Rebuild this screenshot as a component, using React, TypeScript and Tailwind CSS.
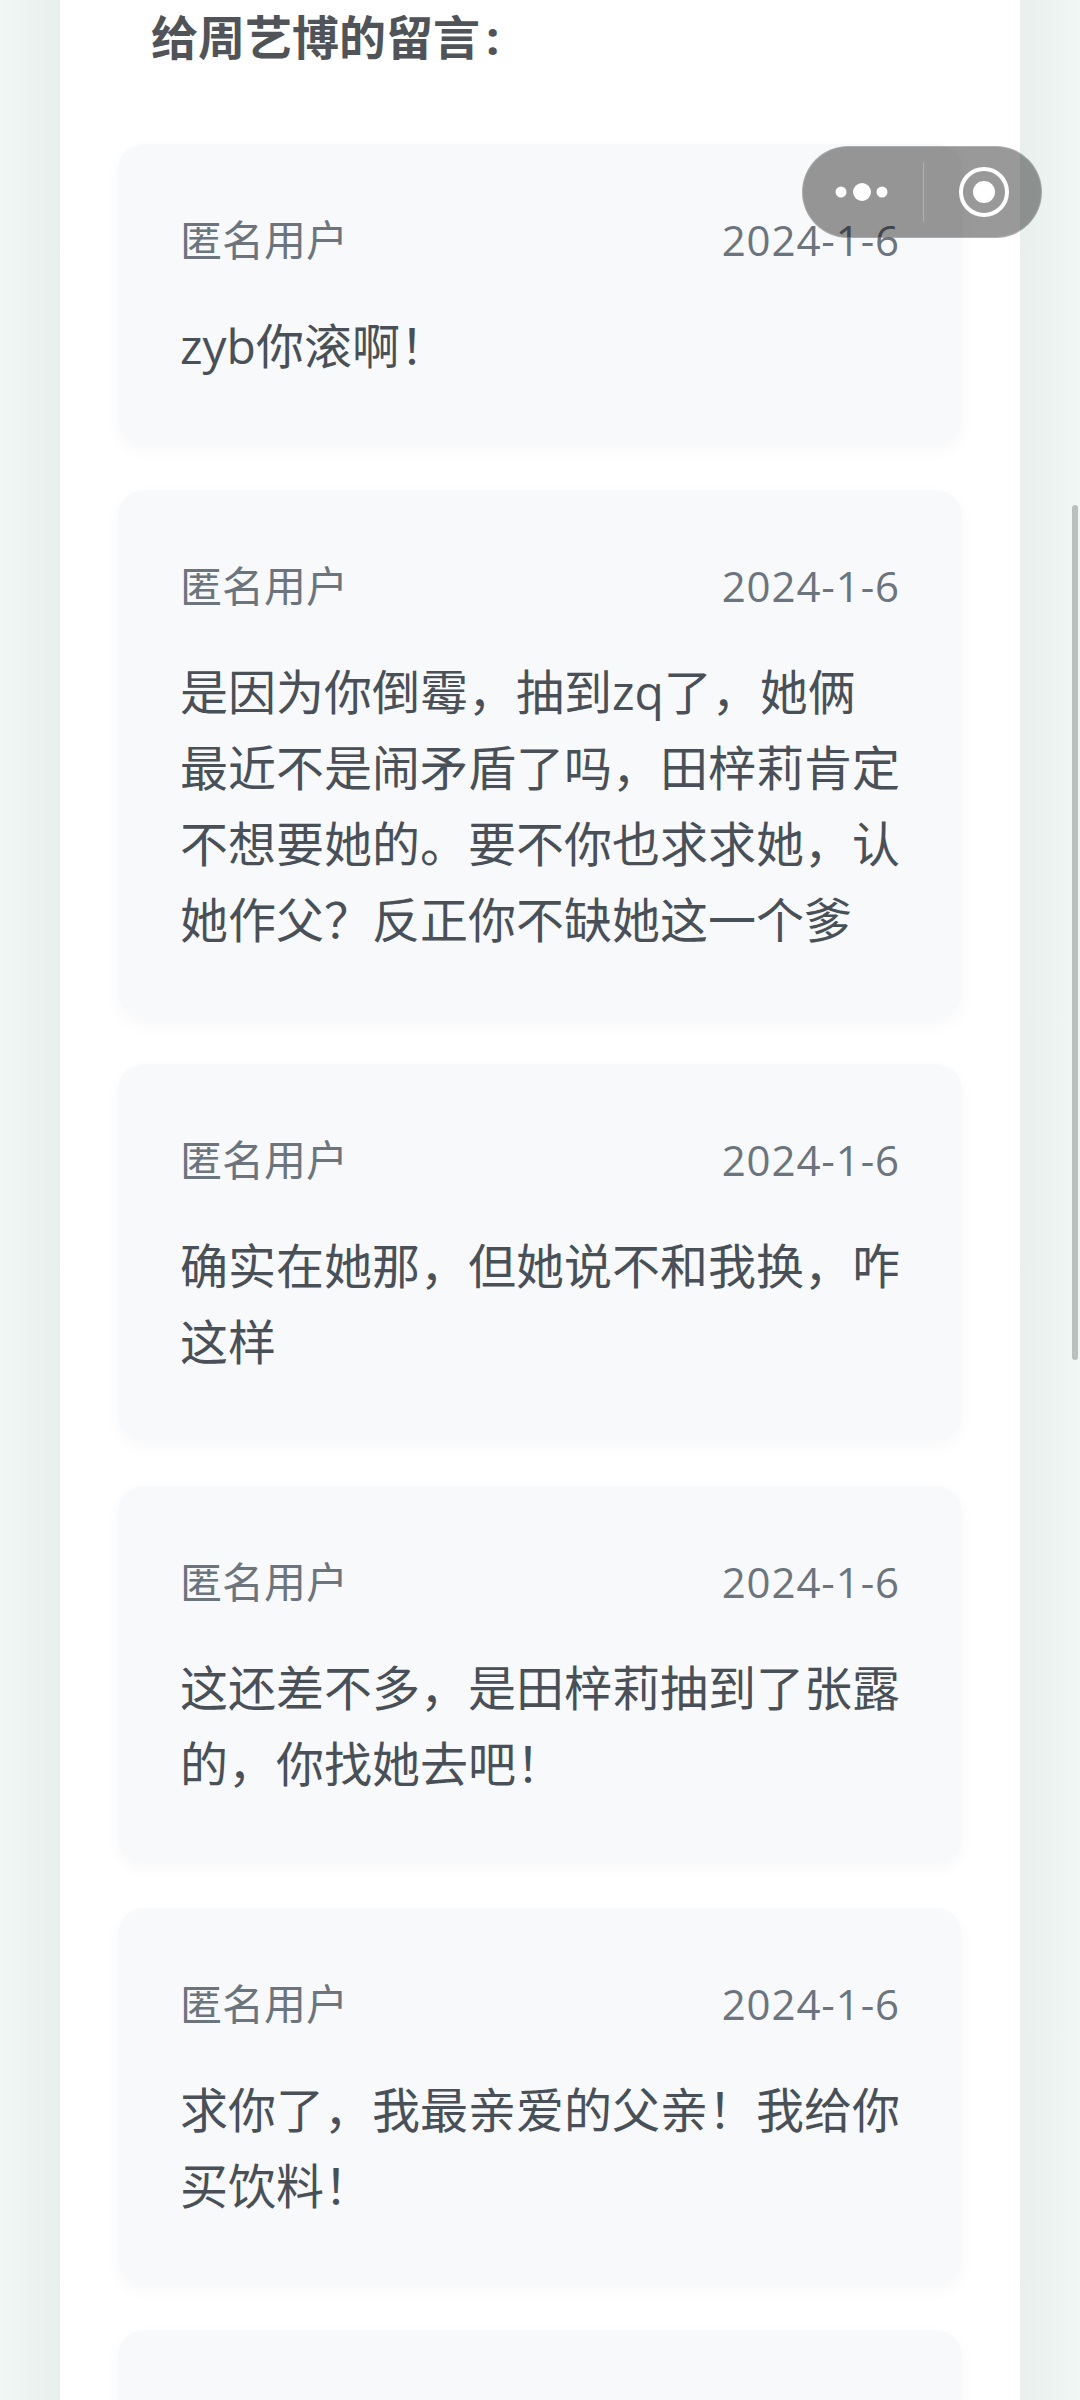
const comments = [
  { id: 1, text: ["zyb你滚啊！"] },
  {
    id: 2,
    text: [
      "是因为你倒霉，抽到zq了，她俩",
      "最近不是闹矛盾了吗，田梓莉肯定",
      "不想要她的。要不你也求求她，认",
      "她作父？反正你不缺她这一个爹",
    ],
  },
  { id: 3, text: ["确实在她那，但她说不和我换，咋", "这样"] },
  { id: 4, text: ["这还差不多，是田梓莉抽到了张露", "的，你找她去吧！"] },
  { id: 5, text: ["求你了，我最亲爱的父亲！我给你", "买饮料！"] },
];

const CommentCard = ({ text }: { text: string[] }) => (
  <article className="-mx-[2px] rounded-[26px] bg-[#f8f9fa] px-[62px] pt-[60px] pb-[61px] shadow-[0_6px_18px_rgba(0,0,0,0.03)]">
    <div className="flex h-[72px] items-center justify-between text-[42px] leading-[72px] text-[#6c757d]">
      <span>匿名用户</span>
      <span className="tracking-[0.9px]">2024-1-6</span>
    </div>
    <div className="mt-[32px] text-[48px] leading-[76px] text-[#495057]">
      {text.map((line, i) => (
        <p key={i} className="whitespace-nowrap">
          {line}
        </p>
      ))}
    </div>
  </article>
);

export default function App() {
  return (
    <div
      className="relative h-[2400px] w-[1080px] overflow-hidden bg-[linear-gradient(90deg,#f2f7f5_0px,#e8efed_60px,#e8efed_1020px,#f2f7f5_1080px)] px-[60px]"
      style={{ fontFamily: '"Open Sans", "Noto Sans CJK SC", sans-serif' }}
    >
      <main className="h-full bg-white px-[60px]">
        <h1 className="pl-[31px] text-[47px] font-bold leading-[74px] text-[#505458]">
          给周艺博的留言<span className="ml-[6px]">:</span>
        </h1>

        <div className="mt-[70px] flex flex-col gap-[45px]">
          {comments.map((c) => (
            <CommentCard key={c.id} text={c.text} />
          ))}
          {/* next card, only its top shows */}
          <div className="-mx-[2px] h-[200px] rounded-[26px] bg-[#f8f9fa] shadow-[0_6px_18px_rgba(0,0,0,0.03)]" />
        </div>
      </main>

      {/* scrollbar */}
      <div className="absolute right-[2px] top-[505px] h-[855px] w-[6px] rounded-full bg-[#b9c0be]" />

      {/* mini program capsule */}
      <div className="absolute left-[802px] top-[146px] flex h-[92px] w-[240px] items-center rounded-full border border-white/20 bg-black/40">
        <svg width="120" height="92" viewBox="0 0 120 92" className="shrink-0">
          <circle cx="38" cy="46" r="5.5" fill="#fff" />
          <circle cx="59" cy="46" r="9" fill="#fff" />
          <circle cx="79" cy="46" r="5.5" fill="#fff" />
        </svg>
        <div className="h-[60px] w-[3px] bg-white/25" />
        <svg width="117" height="92" viewBox="0 0 117 92" className="shrink-0">
          <circle cx="60" cy="46" r="23" fill="none" stroke="#fff" strokeWidth="4" />
          <circle cx="60" cy="46" r="11" fill="#fff" />
        </svg>
      </div>
    </div>
  );
}
